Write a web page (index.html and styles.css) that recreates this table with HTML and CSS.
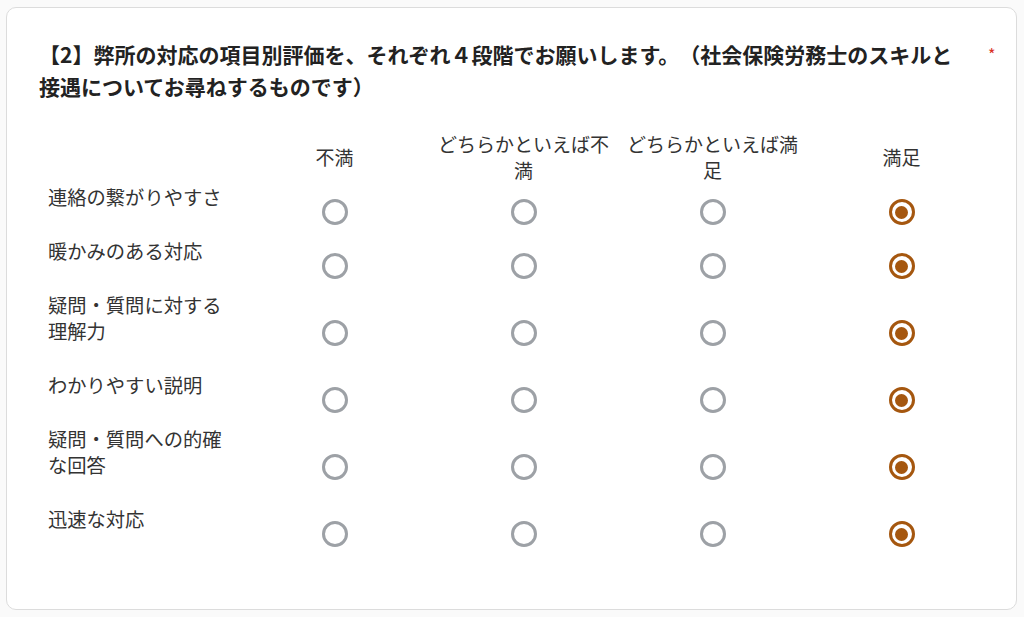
FILE: index.html
```html
<!DOCTYPE html>
<html lang="ja">
<head>
<meta charset="utf-8">
<title>評価</title>
<link rel="stylesheet" href="styles.css">
</head>
<body>
<div class="card">
  <div class="title-row">
    <div class="title">【2】弊所の対応の項目別評価を、それぞれ４段階でお願いします。（社会保険労務士のスキルと接遇についてお尋ねするものです）</div>
    <span class="req">*</span>
  </div>
  <div class="grid">
    <div class="row head">
      <div class="label"></div>
      <div class="col">不満</div>
      <div class="col">どちらかといえば不満</div>
      <div class="col">どちらかといえば満足</div>
      <div class="col">満足</div>
    </div>
    <div class="row">
      <div class="label">連絡の繋がりやすさ</div>
      <div class="cell"><span class="radio"></span></div>
      <div class="cell"><span class="radio"></span></div>
      <div class="cell"><span class="radio"></span></div>
      <div class="cell"><span class="radio on"></span></div>
    </div>
    <div class="row">
      <div class="label">暖かみのある対応</div>
      <div class="cell"><span class="radio"></span></div>
      <div class="cell"><span class="radio"></span></div>
      <div class="cell"><span class="radio"></span></div>
      <div class="cell"><span class="radio on"></span></div>
    </div>
    <div class="row">
      <div class="label">疑問・質問に対する<br>理解力</div>
      <div class="cell"><span class="radio"></span></div>
      <div class="cell"><span class="radio"></span></div>
      <div class="cell"><span class="radio"></span></div>
      <div class="cell"><span class="radio on"></span></div>
    </div>
    <div class="row">
      <div class="label">わかりやすい説明</div>
      <div class="cell"><span class="radio"></span></div>
      <div class="cell"><span class="radio"></span></div>
      <div class="cell"><span class="radio"></span></div>
      <div class="cell"><span class="radio on"></span></div>
    </div>
    <div class="row">
      <div class="label">疑問・質問への的確<br>な回答</div>
      <div class="cell"><span class="radio"></span></div>
      <div class="cell"><span class="radio"></span></div>
      <div class="cell"><span class="radio"></span></div>
      <div class="cell"><span class="radio on"></span></div>
    </div>
    <div class="row">
      <div class="label">迅速な対応</div>
      <div class="cell"><span class="radio"></span></div>
      <div class="cell"><span class="radio"></span></div>
      <div class="cell"><span class="radio"></span></div>
      <div class="cell"><span class="radio on"></span></div>
    </div>
  </div>
</div>
</body>
</html>
```
FILE: styles.css
```css
html, body {
  margin: 0;
  padding: 0;
  background: #fafafa;
}
body {
  padding: 7px 7px 0 6px;
  font-family: "Noto Sans CJK JP", "Noto Sans", sans-serif;
  color: #333;
  text-spacing-trim: space-all;
}
.card {
  background: #fff;
  border: 1px solid #dcdcdc;
  border-radius: 10px;
  padding: 30px 20px 48px 32px;
  box-sizing: border-box;
  width: 1011px;
}
.title-row {
  display: flex;
  gap: 20px;
  align-items: flex-start;
}
.title {
  flex: 1;
  font-size: 21px;
  font-weight: 700;
  line-height: 32px;
  color: #222;
}
.req {
  color: #d93025;
  font-size: 16px;
  line-height: 32px;
  width: 8px;
}
.grid {
  margin: 26px 0 0 9px;
}
.row {
  display: grid;
  grid-template-columns: 192px repeat(4, 189px);
  align-items: center;
}
.row.head {
  height: 57px;
  font-size: 19px;
  line-height: 26px;
}
.col {
  text-align: center;
  padding: 0 4px;
}
.label {
  align-self: start;
  font-size: 19.3px;
  line-height: 26px;
  padding-bottom: 28px;
  margin-top: -1px;
  margin-bottom: 1px;
  color: #333;
}
.head .label {
  padding: 0;
  margin: 0;
}
.cell {
  display: flex;
  justify-content: center;
}
.radio {
  display: block;
  width: 26px;
  height: 26px;
  box-sizing: border-box;
  border: 3px solid #9da1a6;
  border-radius: 50%;
  position: relative;
}
.radio.on {
  border-color: #a5570f;
}
.radio.on::after {
  content: "";
  position: absolute;
  left: 3.5px;
  top: 3.5px;
  width: 13px;
  height: 13px;
  border-radius: 50%;
  background: #a5570f;
}
```
